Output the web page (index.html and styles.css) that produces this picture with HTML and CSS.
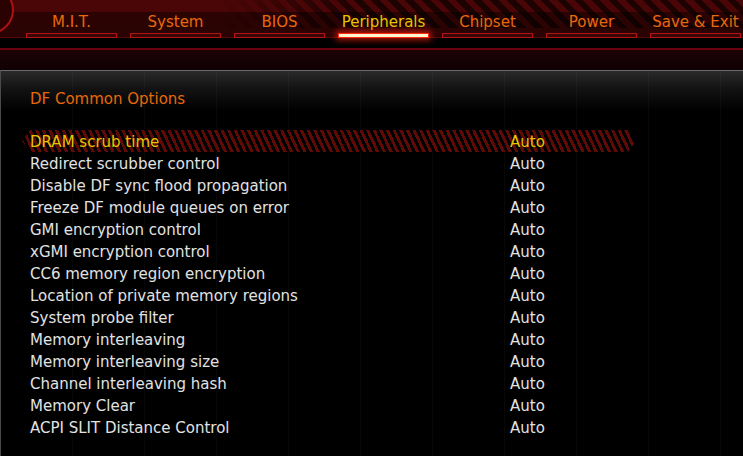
FILE: index.html
```html
<!DOCTYPE html>
<html lang="en">
<head>
  <meta charset="UTF-8" />
  <title>Peripherals — DF Common Options</title>
  <link rel="stylesheet" href="styles.css">
</head>
<body>
  <header class="topbar">
    <div class="logo"></div>
    <nav class="tabs">
      <div class="tab"><span>M.I.T.</span><i class="bar"></i></div>
      <div class="tab"><span>System</span><i class="bar"></i></div>
      <div class="tab"><span>BIOS</span><i class="bar"></i></div>
      <div class="tab active"><span>Peripherals</span><i class="bar"></i></div>
      <div class="tab"><span>Chipset</span><i class="bar"></i></div>
      <div class="tab"><span>Power</span><i class="bar"></i></div>
      <div class="tab"><span>Save &amp; Exit</span><i class="bar"></i></div>
    </nav>
  </header>
  <div class="spacer"></div>
  <div class="redline"></div>
  <div class="haze"></div>

  <main class="panel">
    <h1 class="title">DF Common Options</h1>
    <ul class="options">
      <li class="row selected"><span>DRAM scrub time</span><span>Auto</span></li>
      <li class="row"><span>Redirect scrubber control</span><span>Auto</span></li>
      <li class="row"><span>Disable DF sync flood propagation</span><span>Auto</span></li>
      <li class="row"><span>Freeze DF module queues on error</span><span>Auto</span></li>
      <li class="row"><span>GMI encryption control</span><span>Auto</span></li>
      <li class="row"><span>xGMI encryption control</span><span>Auto</span></li>
      <li class="row"><span>CC6 memory region encryption</span><span>Auto</span></li>
      <li class="row"><span>Location of private memory regions</span><span>Auto</span></li>
      <li class="row"><span>System probe filter</span><span>Auto</span></li>
      <li class="row"><span>Memory interleaving</span><span>Auto</span></li>
      <li class="row"><span>Memory interleaving size</span><span>Auto</span></li>
      <li class="row"><span>Channel interleaving hash</span><span>Auto</span></li>
      <li class="row"><span>Memory Clear</span><span>Auto</span></li>
      <li class="row"><span>ACPI SLIT Distance Control</span><span>Auto</span></li>
    </ul>
  </main>
</body>
</html>
```

FILE: styles.css
```css
:root {
  --orange: #e8680c;
  --yellow: #e8c400;
  --text: #e2e2e2;
  --red: #8c0a0a;
}

* {
  box-sizing: border-box;
  margin: 0;
  padding: 0;
}

html, body {
  width: 743px;
  height: 456px;
  overflow: hidden;
  background: #000;
  font-family: "DejaVu Sans", sans-serif;
}

/* Top tab strip */
.topbar {
  position: relative;
  height: 38px;
  background: linear-gradient(180deg, #4a0606 0, #4a0606 12px, #2c0303 12px, #2a0303 100%);
  border-bottom: 1px solid #5c0606;
}
.topbar::before {
  /* diagonal stripes fading in on the right */
  content: "";
  position: absolute;
  left: 0;
  right: 0;
  top: 0;
  height: 28px;
  background: repeating-linear-gradient(45deg, rgba(0,0,0,0) 0 6px, rgba(0,0,0,0.6) 6px 12px);
  -webkit-mask-image: linear-gradient(90deg, transparent 0, transparent 220px, #000 360px);
  mask-image: linear-gradient(90deg, transparent 0, transparent 220px, #000 360px);
}

.logo {
  position: absolute;
  left: -34px;
  top: -14px;
  width: 48px;
  height: 48px;
  border-radius: 50%;
  border: 2px solid #b01010;
  background: #2a0202;
  z-index: 2;
}

.tabs {
  position: relative;
  z-index: 1;
  display: flex;
  gap: 13px;
  padding-left: 26px;
  padding-top: 10px;
}
.tab {
  width: 91px;
  display: flex;
  flex-direction: column;
  align-items: center;
}
.tab span {
  font-size: 15px;
  line-height: 22px;
  height: 23px;
  padding-top: 1px;
  color: var(--orange);
  white-space: nowrap;
}
.tab .bar {
  display: block;
  width: 100%;
  height: 5px;
  background: #3a0505;
  border: 1px solid #b01414;
}
.tab.active span {
  color: var(--yellow);
}
.tab.active .bar {
  background: #fff6d0;
  border-color: #ff2a10;
  box-shadow: 0 0 6px 2px rgba(255, 30, 10, 0.7);
}

.spacer {
  height: 10px;
}
.redline {
  height: 2px;
  background: #6c0010;
}
.haze {
  height: 20px;
  background: linear-gradient(180deg, #1c0206 0, #100104 100%);
}

/* Settings panel */
.panel {
  height: 386px;
  border-top: 1px solid #6a6a6a;
  border-left: 1px solid #4a4a4a;
  padding: 16px 0 0 29px;
  background:
    repeating-linear-gradient(90deg, rgba(255,255,255,0) 0 71px, rgba(255,255,255,0.03) 71px 72px),
    linear-gradient(180deg, #2a2a2a 0, #121212 18px, #000 40px);
}

.title {
  font-size: 15px;
  font-weight: normal;
  line-height: 20px;
  padding-top: 2px;
  height: 20px;
  color: var(--orange);
}

.options {
  list-style: none;
  margin-top: 23px;
}
.row {
  position: relative;
  display: grid;
  grid-template-columns: 480px 1fr;
  height: 22px;
  line-height: 22px;
  font-size: 15px;
  color: var(--text);
}
.row span {
  position: relative;
  top: 1px;
}
.row.selected {
  color: var(--yellow);
}
.row.selected::before {
  content: "";
  position: absolute;
  left: -8px;
  top: 0;
  width: 614px;
  height: 22px;
  background: repeating-linear-gradient(65deg, #000 0 3px, #5e0a06 3px 6px);
  clip-path: polygon(8px 0, calc(100% - 8px) 0, 100% 50%, calc(100% - 8px) 100%, 8px 100%, 0 50%);
}
```
